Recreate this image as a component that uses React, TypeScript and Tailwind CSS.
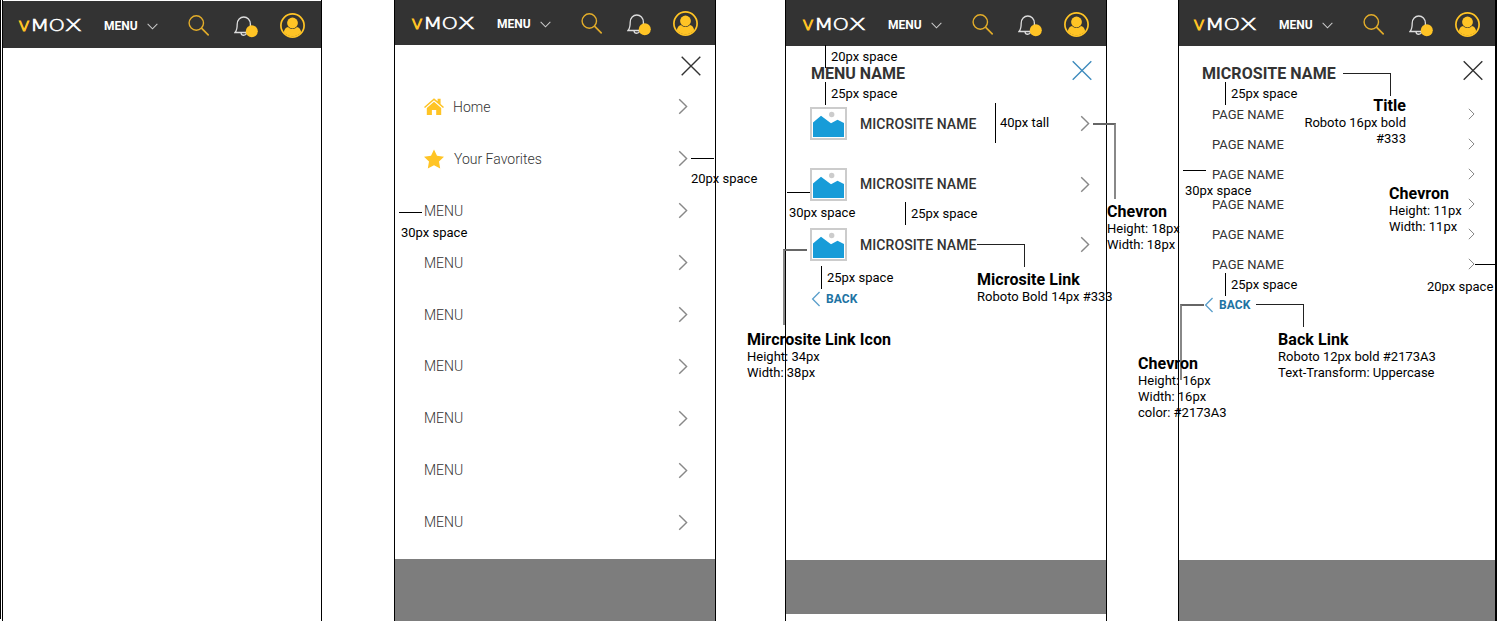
import React from "react";

function Logo() {
  return (
    <svg className="h-4 w-16 shrink-0 overflow-visible" viewBox="0 0 64 16" fontFamily="'DejaVu Sans'" fontWeight="200" fontSize="16.500">
      <text x="0" y="13.300" fontSize="17.500" fill="#ffc425" stroke="#ffc425" strokeWidth="1" textLength="12" lengthAdjust="spacingAndGlyphs">v</text>
      <g fill="#fff" stroke="#fff" strokeWidth="0.600">
        <text x="11.800" y="13.300" textLength="20" lengthAdjust="spacingAndGlyphs">M</text>
        <text x="30.600" y="13.300" textLength="16.500" lengthAdjust="spacingAndGlyphs">O</text>
        <text x="46.400" y="13.300" textLength="17.600" lengthAdjust="spacingAndGlyphs">X</text>
      </g>
    </svg>
  );
}

function Header({ className }: { className: string }) {
  return (
    <header className={"flex shrink-0 items-center bg-[#333333] " + className}>
      <Logo />
      <span className="ml-[22px] w-[34px] text-[12px] leading-4 font-bold text-white">MENU</span>
      <svg className="ml-[9px] h-[7px] w-[11px] translate-y-px" viewBox="0 0 12 7" fill="none" stroke="#ccc" strokeWidth="1.1">
        <path d="M.7 .7 6 6 11.3 .7" />
      </svg>
      <svg className="ml-[30px] h-[21px] w-[21px]" viewBox="0 0 21 21" fill="none" stroke="#e3ad2a" strokeWidth="1.4">
        <circle cx="8.300" cy="8" r="7.2" />
        <path d="m13.500 13.2 7.2 7.2" strokeWidth="1.7" />
      </svg>
      <svg className="ml-[25px] h-[22px] w-6 translate-y-px" viewBox="0 0 24 22" fill="none" stroke="#ddd" strokeWidth="1.3">
        <path d="M1 16.500h16.500C15.800 14.800 16.400 13 16.400 8.200 16.400 4 13.400 1 9.800 1S3.200 4 3.200 8.200c0 4.800-.2 6.100-2.200 8.300zM7 17c.3 3 5 3 5.500 0" />
        <circle cx="17.800" cy="15.300" r="6" fill="#ffc425" stroke="none" />
      </svg>
      <svg className="ml-[22px] h-[25px] w-[25px]" viewBox="0 0 25 25" fill="none">
        <circle cx="12.500" cy="12.500" r="11.600" stroke="#ffc425" strokeWidth="1.700" />
        <circle cx="12.500" cy="10" r="5.400" fill="#ffc425" />
        <path d="M3.800 19.300c.4-3 2.300-5.300 4.300-5.300 2.500 2.700 6.300 2.700 8.800 0 2 0 3.900 2.300 4.300 5.300-3.800 5.500-13.600 5.500-17.400 0z" fill="#ffc425" />
      </svg>
    </header>
  );
}

function Close({ className }: { className: string }) {
  return (
    <svg className={"h-5 w-5 shrink-0 " + className} viewBox="0 0 20 20" fill="none" stroke="currentColor" strokeWidth="1.4">
      <path d="m.7 .7 18.600 18.600M19.300 .7.7 19.300" />
    </svg>
  );
}

function Chevron({ className }: { className: string }) {
  return (
    <svg className={"shrink-0 " + className} viewBox="0 0 10 18" fill="none" stroke="currentColor" strokeWidth="1.5">
      <path d="M1 1.200 8.800 9 1 16.800" />
    </svg>
  );
}

function Back({ className }: { className: string }) {
  return (
    <div className={"flex h-4 items-center text-[12px] leading-4 font-bold tracking-[0.1px] text-[#2173a3] " + className}>
      <Chevron className="mr-[5px] -ml-px h-4 w-[10px] -scale-x-100 text-[#5a9fcb]" />
      BACK
    </div>
  );
}

function Picture() {
  return (
    <svg className="h-[33px] w-[37px] shrink-0" viewBox="0 0 37 33">
      <rect x="1" y="1" width="35" height="31" fill="#fff" stroke="#ccc" strokeWidth="2" />
      <circle cx="21.700" cy="7.500" r="2.700" fill="#ccc" />
      <path d="M3 15.500 11 8.800 21 16.300 27.500 12.800 34 16V30H3z" fill="#189cd8" />
    </svg>
  );
}

const menus = ["a", "b", "c", "d", "e", "f", "g"];
const sites = ["a", "b", "c"];
const pages = ["a", "b", "c", "d", "e", "f"];

function Note({ className, title, lines }: { className: string; title?: string; lines: string[] }) {
  return (
    <div className={"absolute text-[13px] leading-4 whitespace-nowrap text-black " + className}>
      {title && <div className="mb-px text-[16px] leading-4 font-bold tracking-[0.06px]">{title}</div>}
      {lines.map((line) => (
        <div key={line}>{line}</div>
      ))}
    </div>
  );
}

function Rule({ className }: { className: string }) {
  return <div className={"absolute " + className} />;
}

export default function App() {
  return (
    <div className="relative flex h-[621px] w-[1497px] overflow-hidden bg-white font-['Roboto',sans-serif]">
      <div className="mr-px h-[619px] w-px shrink-0 bg-black" />
      <section className="flex w-[320px] shrink-0 flex-col border-x border-black pt-px">
        <Header className="h-[47px] pt-0.5 pl-[15px]" />
      </section>

      <section className="ml-[72px] flex w-[322px] shrink-0 flex-col border-x border-black">
        <Header className="h-[45px] pb-px pl-4 pt-[3px]" />
        <Close className="mt-[11px] mr-3.5 self-end text-[#333]" />
        <nav className="mt-[5px] flex flex-1 flex-col pr-[27px] pl-[29px] text-[14px] leading-4 font-light text-[#333]">
          <div className="flex h-[51.9px] shrink-0 items-center">
            <svg className="mr-[9px] h-[18px] w-5" viewBox="0 0 20 18" fill="#ffc425">
              <path d="M0 8.900 10 .2l3.600 3.100V.8h3v5.100L20 8.900l-1 1.100L10 2.300 1 10z" />
              <path d="M2.800 10 10 3.800 17.200 10v7h-5v-5H7.900v5H2.800z" />
            </svg>
            <span className="flex-1">Home</span>
            <Chevron className="h-[17px] w-[10px] text-[#888]" />
          </div>
          <div className="flex h-[51.9px] shrink-0 items-center">
            <svg className="mr-2.5 h-5 w-5" viewBox="0 0 20 20" fill="#ffc425">
              <path d="m10 .5 3 6.300 7 .9-5 4.900 1.200 6.900L10 16.200l-6.200 3.300L5 12.600 0 7.700l7-.9z" />
            </svg>
            <span className="flex-1">Your Favorites</span>
            <Chevron className="h-[17px] w-[10px] text-[#888]" />
          </div>
          {menus.map((key) => (
            <div key={key} className="flex h-[51.9px] shrink-0 items-center">
              <span className="flex-1">MENU</span>
              <Chevron className="h-[17px] w-[10px] text-[#888]" />
            </div>
          ))}
        </nav>
        <div className="h-[62px] shrink-0 bg-[#7d7d7d]" />
      </section>

      <section className="ml-[69px] flex w-[322px] shrink-0 flex-col border-x border-black pb-[7px]">
        <Header className="h-[46px] pl-4 pt-[3px]" />
        <div className="mt-3.5 flex h-[27px] shrink-0 items-center pr-3.5 pl-[25px]">
          <h2 className="flex-1 text-[16px] leading-4 font-bold text-[#333]">MENU NAME</h2>
          <Close className="-translate-y-[3.5px] text-[#3f8bbd]" />
        </div>
        <div className="mt-5 flex flex-col gap-[27.500px] pr-4 pl-6">
          {sites.map((key) => (
            <div key={key} className="flex h-[33px] items-center">
              <Picture />
              <span className="ml-[13px] flex-1 text-[14px] leading-4 font-medium tracking-[0.07px] text-[#333]">MICROSITE NAME</span>
              <Chevron className="h-[17px] w-[10px] text-[#888]" />
            </div>
          ))}
        </div>
        <Back className="mt-[30px] ml-[26px]" />
        <div className="mt-auto h-[54px] shrink-0 bg-[#7d7d7d]" />
      </section>

      <section className="ml-[71px] flex w-[319px] shrink-0 flex-col border-r-2 border-l border-black">
        <Header className="h-[46px] pl-3.5 pt-[3px]" />
        <div className="mt-3.5 flex h-[27px] shrink-0 items-center pr-3 pl-[23px]">
          <h2 className="flex-1 text-[16px] leading-4 font-bold tracking-[0.07px] text-[#333]">MICROSITE NAME</h2>
          <Close className="-translate-y-[3.5px] text-[#333]" />
        </div>
        <div className="mt-3 flex flex-col pr-5 pl-[33px]">
          {pages.map((key) => (
            <div key={key} className="flex h-[30px] items-center text-[13px] leading-4 text-[#333]">
              <span className="flex-1 pt-0.5">PAGE NAME</span>
              <Chevron className="h-[12px] w-[7px] text-[#888]" />
            </div>
          ))}
        </div>
        <Back className="mt-[18px] ml-[26px]" />
        <div className="mt-auto h-[61px] shrink-0 bg-[#7d7d7d]" />
      </section>

      <Rule className="top-[158px] left-[691px] h-px w-[23px] bg-black" />
      <Note className="top-[171px] left-[691px]" lines={["20px space"]} />
      <Rule className="top-[212px] left-[399px] h-px w-[23px] bg-black" />
      <Note className="top-[225px] left-[401px]" lines={["30px space"]} />

      <Rule className="top-[45px] left-[825px] h-[23px] w-px bg-black" />
      <Note className="top-[49px] left-[831px]" lines={["20px space"]} />
      <Rule className="top-[82px] left-[825px] h-[23px] w-px bg-black" />
      <Note className="top-[86px] left-[831px]" lines={["25px space"]} />
      <Rule className="top-[103px] left-[995px] h-10 w-px bg-black" />
      <Note className="top-[115px] left-[1000px]" lines={["40px tall"]} />
      <Rule className="top-[123px] left-[1093px] h-[76px] w-[23px] border-t-2 border-r-2 border-t-[#666] border-r-[#888]" />
      <Note className="top-[204px] left-[1107px]" title="Chevron" lines={["Height: 18px", "Width: 18px"]} />
      <Rule className="top-[192px] left-[787px] h-px w-[23px] bg-black" />
      <Note className="top-[205px] left-[789px]" lines={["30px space"]} />
      <Rule className="top-[202px] left-[905px] h-[23px] w-px bg-black" />
      <Note className="top-[206px] left-[911px]" lines={["25px space"]} />
      <Rule className="top-[266px] left-[821px] h-[23px] w-px bg-black" />
      <Note className="top-[270px] left-[827px]" lines={["25px space"]} />
      <Rule className="top-[244px] left-[977px] h-[23px] w-12 border-t border-r border-[#222]" />
      <Note className="top-[272px] left-[977px]" title="Microsite Link" lines={["Roboto Bold 14px #333"]} />
      <Rule className="top-[249px] left-[783px] h-[76px] w-6 border-t-2 border-l-2 border-t-[#666] border-l-[#888]" />
      <Note className="top-[332px] left-[747px]" title="Mircrosite Link Icon" lines={["Height: 34px", "Width: 38px"]} />

      <Rule className="top-[73px] left-[1343px] h-[23px] w-12 border-t border-r border-[#222]" />
      <Note className="top-[98px] right-[91px] text-right" title="Title" lines={["Roboto 16px bold", "#333"]} />
      <Rule className="top-[82px] left-[1225px] h-[23px] w-px bg-black" />
      <Note className="top-[86px] left-[1231px]" lines={["25px space"]} />
      <Rule className="top-[170px] left-[1183px] h-px w-[23px] bg-black" />
      <Note className="top-[183px] left-[1185px]" lines={["30px space"]} />
      <Note className="top-[186px] left-[1389px]" title="Chevron" lines={["Height: 11px", "Width: 11px"]} />
      <Rule className="top-[264px] left-[1475px] h-px w-5 bg-black" />
      <Note className="top-[279px] left-[1427px]" lines={["20px space"]} />
      <Rule className="top-[273px] left-[1225px] h-[23px] w-px bg-black" />
      <Note className="top-[277px] left-[1231px]" lines={["25px space"]} />
      <Rule className="top-[304px] left-[1256px] h-[23px] w-12 border-t border-r border-[#222]" />
      <Note className="top-[332px] left-[1278px]" title="Back Link" lines={["Roboto 12px bold #2173A3", "Text-Transform: Uppercase"]} />
      <Rule className="top-[304px] left-[1180px] h-[76px] w-6 border-t-2 border-l-2 border-t-[#666] border-l-[#888]" />
      <Note className="top-[356px] left-[1138px]" title="Chevron" lines={["Height: 16px", "Width: 16px", "color: #2173A3"]} />
    </div>
  );
}
